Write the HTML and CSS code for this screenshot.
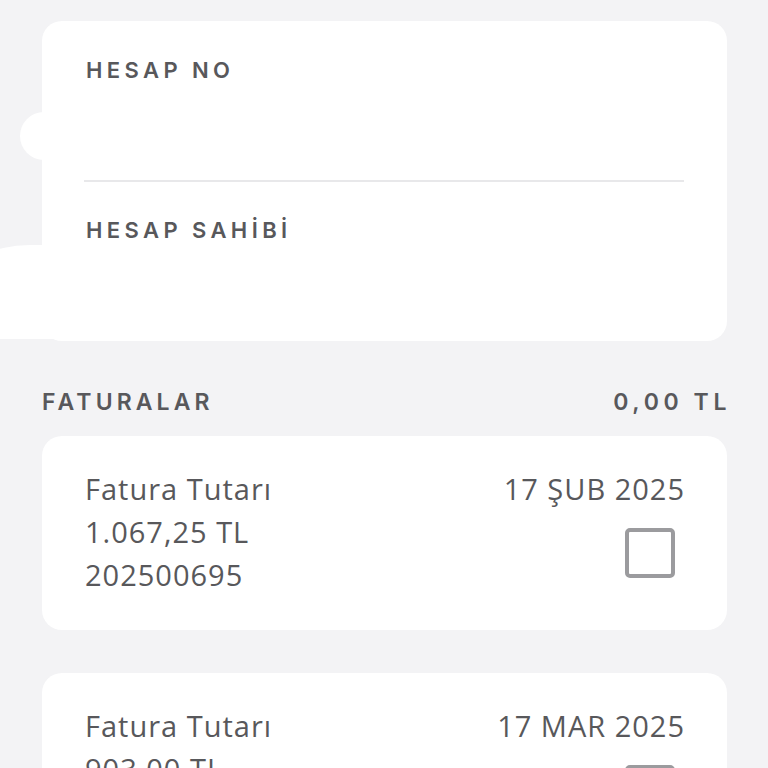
FILE: index.html
```html
<!DOCTYPE html>
<html lang="tr">
<head>
<meta charset="utf-8">
<title>Faturalar</title>
<link rel="stylesheet" href="styles.css">
</head>
<body>
<div class="blob blob-a"></div>
<div class="blob blob-b"></div>
<main class="page">
  <section class="card account">
    <div class="field">
      <div class="label">HESAP NO</div>
      <div class="value"></div>
    </div>
    <div class="divider"></div>
    <div class="field">
      <div class="label">HESAP SAHİBİ</div>
      <div class="value"></div>
    </div>
  </section>

  <div class="section-head">
    <span class="label">FATURALAR</span>
    <span class="label total">0,00 TL</span>
  </div>

  <section class="card invoice">
    <div class="inv-left">
      <div class="line">Fatura Tutarı</div>
      <div class="line">1.067,25 TL</div>
      <div class="line">202500695</div>
    </div>
    <div class="inv-right">
      <div class="line">17 ŞUB 2025</div>
      <span class="checkbox"></span>
    </div>
  </section>

  <section class="card invoice">
    <div class="inv-left">
      <div class="line">Fatura Tutarı</div>
      <div class="line">903,00 TL</div>
      <div class="line">202500812</div>
    </div>
    <div class="inv-right">
      <div class="line">17 MAR 2025</div>
      <span class="checkbox"></span>
    </div>
  </section>
</main>
</body>
</html>
```

FILE: styles.css
```css
html, body {
  margin: 0;
  padding: 0;
  background: #f3f3f5;
  height: 768px;
  overflow: hidden;
}
body {
  font-family: "Open Sans", Inter, "Liberation Sans", sans-serif;
  color: #58585b;
  position: relative;
}
.page {
  position: relative;
  z-index: 1;
  padding: 21px 41px 0 42px;
  display: flex;
  flex-direction: column;
}
.card {
  background: #ffffff;
  border-radius: 20px;
}
.account {
  padding: 34px 43px 0 42px;
  height: 286px;
  display: flex;
  flex-direction: column;
}
.label {
  font-family: Inter, "Open Sans", sans-serif;
  font-size: 22px;
  line-height: 30px;
  font-weight: 600;
  letter-spacing: 4.4px;
  color: #58585b;
  padding-left: 2px;
}
.field .value {
  height: 95px;
}
.divider {
  height: 2px;
  background: #e8e8ea;
  margin-bottom: 33px;
}
.section-head {
  display: flex;
  justify-content: space-between;
  margin-top: 46px;
  margin-bottom: 19px;
}
.section-head .label {
  font-size: 23px;
  padding-left: 0;
  letter-spacing: 4.1px;
}
.section-head .total {
  letter-spacing: 4.6px;
  margin-right: -4px;
}
.invoice {
  display: flex;
  justify-content: space-between;
  padding: 31px 43px 34px 43px;
  margin-bottom: 43px;
}
.line {
  font-size: 29px;
  line-height: 43px;
  font-weight: 400;
  white-space: nowrap;
  letter-spacing: 1px;
}
.inv-right .line {
  margin-right: -1px;
}
.inv-right {
  display: flex;
  flex-direction: column;
  align-items: flex-end;
}
.checkbox {
  display: block;
  width: 42px;
  height: 42px;
  border: 4px solid #9b9b9e;
  border-radius: 5px;
  margin-top: 18px;
  margin-right: 9px;
}
.blob {
  position: absolute;
  background: #ffffff;
  z-index: 0;
}
.blob-a {
  left: 20px;
  top: 112px;
  width: 48px;
  height: 48px;
  border-radius: 50%;
}
.blob-b {
  left: -40px;
  top: 245px;
  width: 110px;
  height: 94px;
  border-radius: 70px 0 0 14px / 40px 0 0 14px;
}
```
